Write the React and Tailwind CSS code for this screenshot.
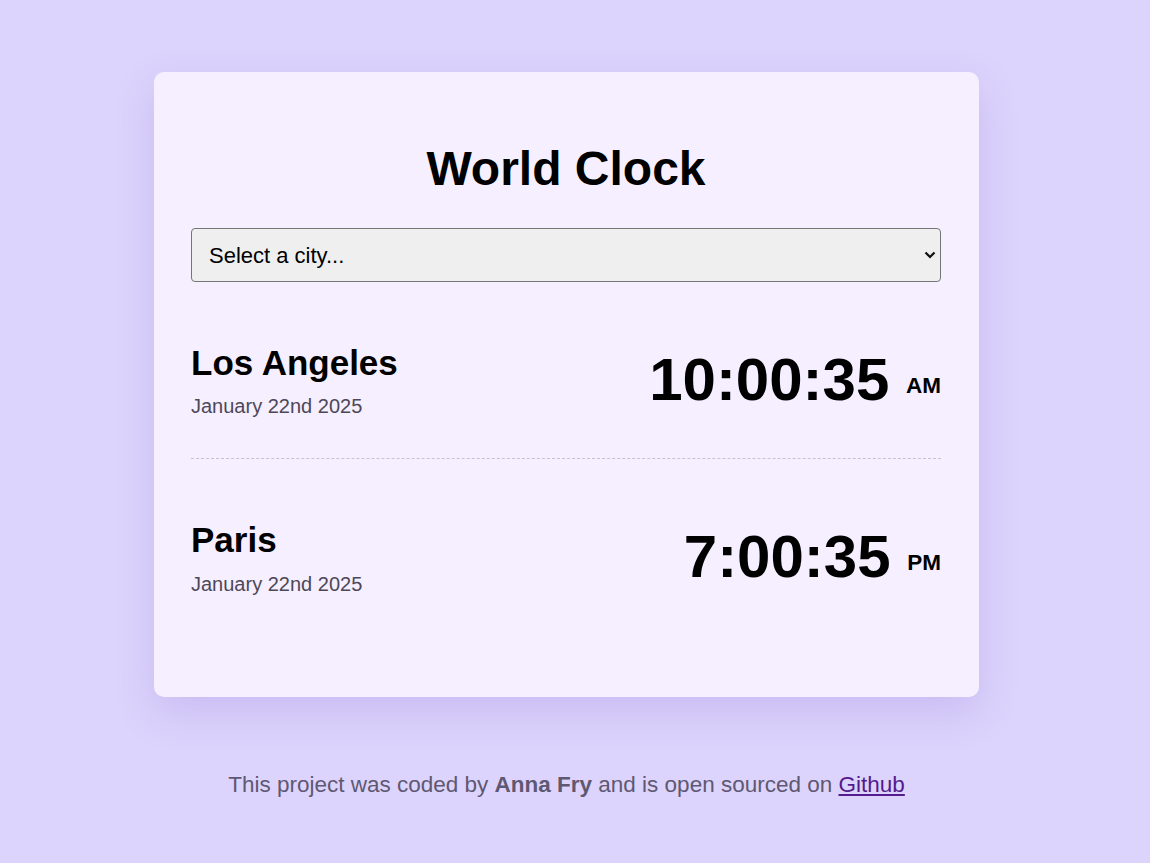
import React from "react";

function CityRow({ name, date, time, ampm, last }) {
  return (
    <div
      className={
        "flex items-center justify-between pt-[61px] pb-[40px] " +
        (last ? "" : "border-b border-dashed border-[#c7c1d3]")
      }
    >
      <div>
        <div className="text-[35px] font-bold leading-[1.15] text-black">{name}</div>
        <div className="mt-[12px] text-[20px] leading-[1.15] text-[#4d4858]">{date}</div>
      </div>
      <div className="-mt-[3px] text-right text-[60px] font-bold leading-[1.15] text-black whitespace-nowrap">
        {time}{" "}
        <span className="text-[22.5px] align-[7px]">{ampm}</span>
      </div>
    </div>
  );
}

export default function App() {
  return (
    <div
      className="min-h-screen bg-[#dcd4fc] pr-[17px] pt-[72px] pb-[60px]"
      style={{ fontFamily: '"Liberation Sans", Arial, sans-serif' }}
    >
      <div className="mx-auto w-[825px] rounded-[10px] bg-[#f5efff] pl-[37px] pr-[38px] pt-[69px] pb-[61px] shadow-[0_15px_40px_rgba(110,80,200,0.18)]">
        <h1 className="text-center text-[48px] font-bold leading-[1.15] text-black">World Clock</h1>
        <div className="relative mt-[32px]">
          <select className="block h-[54px] w-full appearance-none rounded-[4px] border border-[#767676] bg-[#efefef] pl-[17px] text-[22px] text-black outline-none">
            <option>Select a city...</option>
          </select>
          <svg
            className="pointer-events-none absolute right-[5px] top-[23px]"
            width="12"
            height="8"
            viewBox="0 0 12 8"
          >
            <path d="M1.5 1.5 L6 6 L10.5 1.5" fill="none" stroke="#111" strokeWidth="2.2" />
          </svg>
        </div>
        <CityRow name="Los Angeles" date="January 22nd 2025" time="10:00:35" ampm="AM" />
        <CityRow name="Paris" date="January 22nd 2025" time="7:00:35" ampm="PM" last />
      </div>
      <p className="mt-[75px] text-center text-[22.5px] leading-[1.15] text-[#5f5872]">
        This project was coded by <strong className="font-bold">Anna Fry</strong> and is open
        sourced on{" "}
        <a href="#" className="text-[#551a8b] underline">
          Github
        </a>
      </p>
    </div>
  );
}
